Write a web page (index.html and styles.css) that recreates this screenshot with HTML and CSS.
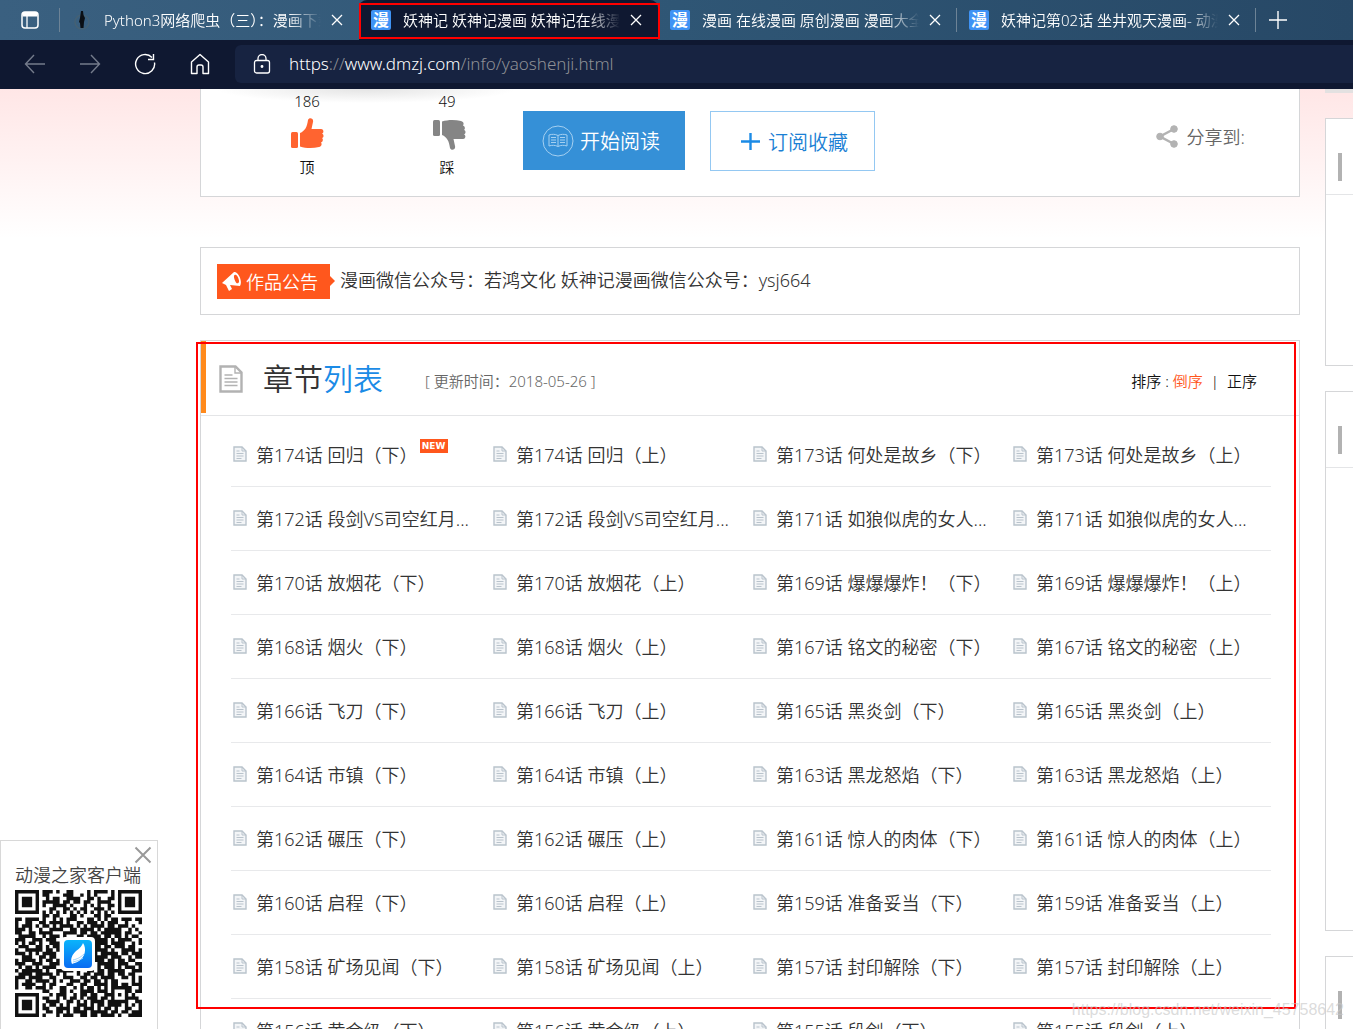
FILE: index.html
```
<!DOCTYPE html>
<html lang="zh-CN">
<head>
<meta charset="utf-8">
<title>妖神记漫画</title>
<link rel="stylesheet" href="styles.css">
</head>
<body>
<svg class="defs" aria-hidden="true">
  <symbol id="doc" viewBox="0 0 14 16"><path d="M1 1h8l4 4v10H1z" fill="#f3f5f7" stroke="#b9c3cc" stroke-width="1.4"/><path d="M9 1v4h4M3.500 5h3M3.500 7.500h7M3.500 10h7M3.500 12.500h5" fill="none" stroke="#b9c3cc"/></symbol>
  <symbol id="x" viewBox="0 0 12 12"><path d="M1 1l10 10M11 1L1 11" fill="none" stroke="currentColor" stroke-width="1.3"/></symbol>
</svg>
<header class="browser">
  <div class="tabbar">
    <button class="tabmenu" aria-label="标签页操作"><svg width="18" height="18" viewBox="0 0 18 18"><rect x="1" y="1" width="16" height="16" rx="3" fill="none" stroke="#fff" stroke-width="1.500"/><path d="M1.500 3a2 2 0 012-2h11a2 2 0 012 2v2.500h-15z" fill="#fff"/><path d="M6 5v12" stroke="#fff" stroke-width="1.300"/></svg></button>
    <div class="tab tab-first"><svg class="favicon" viewBox="0 0 20 20"><circle cx="10" cy="12" r="7" fill="none" stroke="#456174" stroke-width="1.500"/><path d="M9 1h2l.5 4 1.500 3-1 4-.5 6h-3l-.5-5-1-1 1-4z" fill="#0b0f14"/></svg><span class="tabtitle">Python3网络爬虫（三）：漫画下载</span><button class="close" aria-label="关闭"><svg><use href="#x"/></svg></button></div>
    <div class="tab active"><span class="favicon man">漫</span><span class="tabtitle">妖神记 妖神记漫画 妖神记在线漫画</span><button class="close" aria-label="关闭"><svg><use href="#x"/></svg></button></div>
    <div class="tab"><span class="favicon man">漫</span><span class="tabtitle">漫画 在线漫画 原创漫画 漫画大全</span><button class="close" aria-label="关闭"><svg><use href="#x"/></svg></button></div>
    <div class="tab"><span class="favicon man">漫</span><span class="tabtitle">妖神记第02话 坐井观天漫画- 动漫之家</span><button class="close" aria-label="关闭"><svg><use href="#x"/></svg></button></div>
    <button class="newtab" aria-label="新标签页"><svg width="18" height="18" viewBox="0 0 18 18"><path d="M9 0v18M0 9h18" stroke="#fff" stroke-width="1.400"/></svg></button>
  </div>
  <nav class="toolbar">
    <button class="nav dim" aria-label="后退"><svg viewBox="0 0 22 22"><path d="M21 11H1.500M10 2L1.500 11l8.500 9"/></svg></button>
    <button class="nav dim" aria-label="前进"><svg viewBox="0 0 22 22"><path d="M1 11h19.500M12 2l8.500 9-8.500 9"/></svg></button>
    <button class="nav" aria-label="刷新"><svg viewBox="0 0 22 22"><path d="M20.500 9.500A9.500 9.500 0 1118 4.500M19.500 1v5.500H14"/></svg></button>
    <button class="nav" aria-label="主页"><svg viewBox="0 0 22 22"><path d="M2.500 9L11 1.500 19.500 9v11.500H14V14a2 2 0 00-2-2h-2a2 2 0 00-2 2v6.500H2.500z" stroke-linejoin="round"/></svg></button>
    <a class="address" href="#"><svg class="lock" viewBox="0 0 18 20"><rect x="1.500" y="6.500" width="15" height="12.500" rx="2"/><path d="M5 6.500V4.500a4 4 0 018 0v2"/><circle cx="9" cy="12.500" r=".8" fill="#fff"/></svg><span class="url">https<i>://</i>www.dmzj.com<i>/info/yaoshenji.html</i></span></a>
  </nav>
</header>

<div class="page">
  <main class="main">
    <section class="panel actions">
      <button class="stat">186<svg viewBox="0 0 33 32" fill="#ff6430"><rect x="0" y="14" width="7" height="16" rx="1.500"/><path d="M9 15c5-2 7-6 8-13 1-3 6-2 5 2l-1.500 7H30c3 0 3 4 1 4.500 2 1 2 4 0 4.500 1.500 1 1 4-1 4.500 1.500 2 0 4-2 4.500-6 1.500-13 1.500-19-.5z"/></svg>顶</button>
      <button class="stat down">49<svg viewBox="0 0 33 32" fill="#858585"><rect x="0" y="2" width="7" height="16" rx="1.500"/><path d="M9 17c5 2 7 6 8 13 1 3 6 2 5-2l-1.500-7H30c3 0 3-4 1-4.500 2-1 2-4 0-4.500 1.500-1 1-4-1-4.500 1.500-2 0-4-2-4.500-6-1.500-13-1.500-19 .5z"/></svg>踩</button>
      <button class="read"><svg width="32" height="32" viewBox="0 0 32 32" fill="none" stroke="#a5d0f1"><circle cx="16" cy="16" r="15"/><path d="M16 10.500c-3-1.500-6-1.500-9-.5v11c3-1 6-1 9 .5 3-1.500 6-1.500 9-.5V10c-3-1-6-1-9 .5zm0 0v11M9 12.500h5M9 15h5M9 17.500h5M18 12.500h5M18 15h5M18 17.500h5"/></svg>开始阅读</button>
      <button class="subscribe"><svg width="19" height="19" viewBox="0 0 19 19"><path d="M9.500 1v17M0 9.500h19" stroke="#1b8be6" stroke-width="2.400"/></svg>订阅收藏</button>
      <span class="share"><svg width="23" height="23" viewBox="0 0 23 23" fill="#b3b3b3" stroke="#b3b3b3"><path d="M18 4L4 11.500 18 19" fill="none" stroke-width="2.500"/><circle cx="18" cy="4" r="3.300"/><circle cx="4" cy="11.500" r="3.300"/><circle cx="18" cy="19" r="3.300"/></svg>分享到:</span>
    </section>

    <section class="panel notice">
      <strong class="label"><svg width="20" height="20" viewBox="0 0 20 20"><path d="M0 12L12 1c4-1 9 9 6 14L8 14l2 4-3 2-3-6z" fill="#fff"/><ellipse cx="14.500" cy="8" rx="2" ry="4.500" transform="rotate(-20 14.500 8)" fill="#ff571d"/></svg>作品公告</strong>
      <p>漫画微信公众号：若鸿文化 妖神记漫画微信公众号：ysj664</p>
    </section>

    <section class="panel chapters">
      <div class="head">
        <svg class="headicon" viewBox="0 0 24 28" fill="none" stroke="#b2b2b2"><path d="M1.500 1.500h15l6 6v19h-21z" stroke-width="2.400"/><path d="M16 1.500V8h6.500M5.500 10h8M5.500 13.500h13M5.500 17h13M5.500 20.500h13" stroke-width="1.400"/></svg>
        <h2>章节<em>列表</em></h2>
        <span class="updated">[ 更新时间：2018-05-26 ]</span>
        <span class="sort">排序 : <a class="on" href="#">倒序</a><b>|</b><a href="#">正序</a></span>
      </div>
      <ul class="list" id="list"></ul>
      <div class="outline"></div>
    </section>
  </main>
  <aside class="side">
    <div class="card rank"><div class="cardhead"></div></div>
    <div class="card related"><div class="cardhead"></div></div>
    <div class="card more"><div class="cardhead"></div></div>
  </aside>
</div>

<div class="app">
  <button class="appclose" aria-label="关闭"><svg width="18" height="18"><use href="#x"/></svg></button>
  <p>动漫之家客户端</p>
  <svg class="qr" viewBox="0 0 37 37"><path id="qr" fill="#111"/></svg>
  <svg class="logo" viewBox="0 0 28 28"><defs><linearGradient id="g" x1="0" y1="0" x2="0" y2="1"><stop offset="0" stop-color="#0ab4fb"/><stop offset="1" stop-color="#0a6cf2"/></linearGradient></defs><rect width="28" height="28" rx="4" fill="url(#g)"/><path d="M19 3c4 6 2 14-4 18-3 2-6 2-7 3-2-5 0-9 4-13 4-3 6-5 7-8z" fill="#fff"/><path d="M20 14c-4 4-7 5-11 6M19 18c-3 2-6 3-10 4" stroke="#9cd2fb" fill="none"/></svg>
</div>
<span class="watermark">https://blog.csdn.net/weixin_45758642</span>
<script src="script.js"></script>
</body>
</html>
```
FILE: styles.css
```
* { box-sizing: border-box; }
body {
  margin: 0;
  height: 100vh;
  overflow: hidden;
  position: relative;
  display: flex;
  flex-direction: column;
  background: #fff;
  color: #111;
  font: 350 15px "Noto Sans", "Noto Sans CJK SC", sans-serif;
}
button { font: inherit; color: inherit; border: 0; background: none; padding: 0; }
a { color: inherit; text-decoration: none; }
p, h2, ul { margin: 0; padding: 0; }
.defs { display: none; }

.browser { flex: none; color: #fff; }
.tabbar { display: flex; height: 40px; background: linear-gradient(90deg, #3a6080, #2f5675 50%, #274866); }
.tabmenu { flex: none; width: 60px; display: grid; place-items: center; position: relative; }
.tab { flex: 0 0 299px; min-width: 0; display: flex; align-items: center; padding: 0 16px 0 12px; position: relative; }
.tabmenu::after, .tab:nth-child(n+4)::after { content: ""; position: absolute; right: 0; top: 8px; height: 24px; border-right: 1px solid #6d8396; }
.active { background: #0f1831; border-radius: 8px 8px 0 0; }
.active::before { content: ""; position: absolute; inset: 3px -2px 1px 0; border: 2px solid #f00; z-index: 2; }
.favicon { width: 20px; height: 20px; flex: none; }
.man { display: grid; place-items: center; border-radius: 2px; background: #3f93f5; font-size: 16px; line-height: 20px; font-weight: 700; overflow: hidden; }
.tabtitle { flex: 1; min-width: 0; margin: 0 10px 0 12px; padding-bottom: 2px; white-space: nowrap; overflow: hidden; mask-image: linear-gradient(90deg, #000 85%, transparent); }
.close { flex: none; width: 12px; height: 12px; display: flex; }
.close svg { width: 12px; height: 12px; }
.newtab { width: 44px; display: grid; place-items: center; }
.toolbar { display: flex; align-items: center; height: 49px; padding: 0 0 2px 7px; background: #0f1831; }
.nav { width: 55px; height: 40px; display: grid; place-items: center; }
.nav svg { width: 22px; height: 22px; fill: none; stroke: #fff; stroke-width: 1.4; }
.dim svg { stroke: #747b8b; }
.address { flex: 1; height: 38px; margin-left: 8px; padding-left: 18px; display: flex; align-items: center; gap: 18px; background: #172341; border-radius: 6px 0 0 6px; }
.lock { width: 18px; height: 20px; fill: none; stroke: #fff; stroke-width: 1.3; }
.url { font-size: 17px; padding-bottom: 1px; }
.url i { font-style: normal; color: #8e9095; }

.page {
  flex: 1;
  min-height: 0;
  display: grid;
  grid-template-columns: minmax(0, 1fr) 28px;
  gap: 25px;
  padding-left: 200px;
  background: linear-gradient(#ffe6e6, #fff 150px);
}
.panel { background: #fff; border: 1px solid #d5d6d8; position: relative; }
.actions { height: 108px; border-top: 0; display: flex; align-items: flex-start; padding-left: 36px; background: radial-gradient(ellipse 150px 14px at 165px 0, #e4e4e4, #fff); }
.stat { width: 140px; display: flex; flex-direction: column; align-items: center; line-height: 24px; gap: 5px; }
.stat svg { width: 33px; height: 32px; }
.down svg { margin-left: 5px; }
.read { width: 162px; height: 59px; margin: 22px 25px 0 6px; padding-left: 19px; display: flex; align-items: center; gap: 6px; font-size: 20px; color: #fff; background: #3590d7; }
.subscribe { width: 165px; height: 60px; margin-top: 22px; padding-left: 30px; display: flex; align-items: center; gap: 8px; font-size: 20px; color: #1b80d4; border: 1px solid #94c8f2; }
.share { margin: 34px 54px 0 auto; display: flex; align-items: center; gap: 8px; font-size: 18px; color: #666; }
.notice { margin-top: 50px; height: 68px; padding-left: 16px; display: flex; align-items: center; gap: 10px; font-size: 18px; color: #333; }
.notice p { padding-bottom: 4px; }
.label { position: relative; height: 35px; width: 113px; padding-left: 5px; display: flex; align-items: center; gap: 4px; background: #ff571d; color: #fff; font-weight: 350; font-size: 18px; }
.label::after { content: ""; position: absolute; left: 100%; border: 5px solid transparent; border-left-color: #ff571d; border-right: 0; }

.chapters { margin-top: 25px; }
.head { height: 75px; display: flex; align-items: center; padding: 1px 42px 0 18px; border-bottom: 1px solid #e4e5e7; position: relative; }
.head::before { content: ""; position: absolute; left: 0; top: 0; width: 5px; height: 72px; background: #ff8a1c; }
.headicon { width: 24px; height: 28px; }
h2 { margin-left: 20px; font-size: 30px; font-weight: 350; line-height: 40px; color: #333; }
h2 em { font-style: normal; color: #1b8be6; }
.updated { margin-left: 42px; padding-top: 4px; color: #666; }
.sort { margin-left: auto; padding-top: 4px; white-space: pre; }
.sort b { margin: 0 8px; font-weight: 350; }
.on { color: #ff571d; }
.list { list-style: none; display: grid; grid-template-columns: repeat(4, 1fr); padding: 7px 28px 0 30px; }
.list li { height: 64px; display: flex; align-items: center; padding: 0 0 1px 2px; border-bottom: 1px solid #e8e9eb; white-space: nowrap; font-size: 18px; color: #333; }
.list a { display: flex; align-items: center; gap: 9px; }
.list svg { width: 14px; height: 16px; }
.new { width: 28px; height: 14px; margin: 0 0 16px 2px; background: #ff571d; color: #fff; font: 700 9px/14px "DejaVu Sans", sans-serif; text-align: center; }
.outline { position: absolute; left: -5px; right: 3px; top: 1px; height: 667px; border: 2px solid #f00; }

.side { display: flex; flex-direction: column; gap: 25px; padding-top: 29px; position: relative; }
.side::before { content: ""; position: absolute; top: 0; left: 0; right: 0; height: 4px; background: #e3e1e1; }
.card { flex: none; background: #fff; border: 1px solid #d5d6d8; border-right: 0; }
.cardhead { height: 76px; padding: 34px 0 0 12px; border-bottom: 1px solid #e4e5e7; }
.cardhead::before { content: ""; display: block; width: 4px; height: 28px; background: #b2b2b2; }
.rank { height: 248px; }
.related { height: 540px; }
.more { height: 240px; }

.app { position: absolute; left: 0; bottom: 0; width: 158px; height: 189px; padding: 21px 14px 0; background: #fff; border: 1px solid #d8d8d8; border-bottom: 0; }
.app p { font-size: 18px; line-height: 26px; margin-bottom: 2px; color: #444; white-space: nowrap; }
.appclose { position: absolute; right: 5px; top: 5px; width: 18px; height: 18px; color: #999; display: flex; }
.qr { display: block; width: 127px; height: 127px; }
.logo { position: absolute; left: 60px; top: 96px; width: 34px; height: 34px; border: 3px solid #fff; background: #fff; border-radius: 4px; }
.watermark { position: absolute; right: 9px; bottom: 9px; font: 16px/20px "Liberation Sans", sans-serif; color: rgba(200, 200, 200, .65); }
```
FILE: script.js
```
const chapters = [
  "第174话 回归（下）", "第174话 回归（上）", "第173话 何处是故乡（下）", "第173话 何处是故乡（上）",
  "第172话 段剑VS司空红月...", "第172话 段剑VS司空红月...", "第171话 如狼似虎的女人...", "第171话 如狼似虎的女人...",
  "第170话 放烟花（下）", "第170话 放烟花（上）", "第169话 爆爆爆炸！（下）", "第169话 爆爆爆炸！（上）",
  "第168话 烟火（下）", "第168话 烟火（上）", "第167话 铭文的秘密（下）", "第167话 铭文的秘密（上）",
  "第166话 飞刀（下）", "第166话 飞刀（上）", "第165话 黑炎剑（下）", "第165话 黑炎剑（上）",
  "第164话 市镇（下）", "第164话 市镇（上）", "第163话 黑龙怒焰（下）", "第163话 黑龙怒焰（上）",
  "第162话 碾压（下）", "第162话 碾压（上）", "第161话 惊人的肉体（下）", "第161话 惊人的肉体（上）",
  "第160话 启程（下）", "第160话 启程（上）", "第159话 准备妥当（下）", "第159话 准备妥当（上）",
  "第158话 矿场见闻（下）", "第158话 矿场见闻（上）", "第157话 封印解除（下）", "第157话 封印解除（上）",
  "第156话 黄金级（下）", "第156话 黄金级（上）", "第155话 段剑（下）", "第155话 段剑（上）"
];
document.getElementById("list").innerHTML = chapters.map((name, i) =>
  `<li><a href="#"><svg><use href="#doc"/></svg>${name}</a>${i === 0 ? '<span class="new">NEW</span>' : ""}</li>`
).join("");

const rows = [
  "#######.###.#..##....#.####.#.#######",
  "#.....#.##....###..#.#.#....#.#.....#",
  "#.###.#..#.##..####..##.#..##.#.###.#",
  "#.###.#.#####.##.##.##..####..#.###.#",
  "#.###.#.#..####.#...#.#.#..##.#.###.#",
  "#.....#...##..##.#.##..###.#..#.....#",
  "#######.#.#.#.#.#.#.#.#.#.#.#.#######",
  "........##.##...##.#...##.##.........",
  "##.####.#..#.#.###...##.#.#.##.###.##",
  "#..##..##.####.#..##.###.#.###..#...#",
  "#.###.#.##.#.####.#.#.####.##.###.#..",
  "###.#..#..####..##.####.#.#####..#.#.",
  "##..##.####...####.##.##.######.##..#",
  ".#####..#.###.#...##.####.##.##.#.##.",
  "###..###.###........#.#####.#.####..#",
  "#.#.##.#..###.......##.####.####..#.#",
  ".###..##.#.##.......#.###.##.###.##..",
  "#..#####.##.#........######.#..####.#",
  "###.#.#.####........#.##.#####.##.###",
  "..###..##.##........##.####.###..#.##",
  "#.####.#.##.#.......#.####.##.##.##..",
  "###..###..###........##.#####.###..##",
  ".#.##.#.####........###.#.###.#.###.#",
  "#.######.#..#####.#..##.##.#####..###",
  ".####.#####.#.#...#.##.###.##.##.##..",
  "###.####..##..###..##.##.####..##.#.#",
  "#..##.####.#.#..###.##.##.#.##....#.#",
  "#.####..#.##...##..##..####.##.##.###",
  "#..##.###.#..##..#.#.##.#.#.######..#",
  "........##...##.#..####.###.#...##.##",
  "#######...#.###..#.##.##..###.#.#.#..",
  "#.....#.##..#.#.##.#.###.##.#...####.",
  "#.###.#..####..##.#.#.####.######..##",
  "#.###.#.#.##.#.#..###.#.##.####.#.#.#",
  "#.###.#.##..####.##.###.#.##.#..##..#",
  "#.....#..##.##.#.####.#####.##.##.###",
  "#######.#...#.###..##.##.####.#..####"
];
document.getElementById("qr").setAttribute("d", rows.map((row, y) =>
  [...row].map((cell, x) => cell === "#" ? `M${x} ${y}h1v1h-1z` : "").join("")
).join(""));
```
